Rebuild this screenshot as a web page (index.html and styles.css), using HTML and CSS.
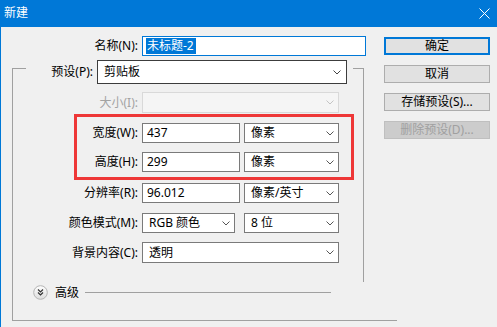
FILE: index.html
```html
<!DOCTYPE html>
<html>
<head>
<meta charset="utf-8">
<link rel="stylesheet" href="styles.css">
</head>
<body>
<div class="window">
  <div class="titlebar">
    <span class="title">新建</span>
    <svg class="close" width="11" height="11" viewBox="0 0 11 11"><path d="M0.5 0.5 L10.5 10.5 M10.5 0.5 L0.5 10.5" stroke="#fff" stroke-width="1" fill="none"/></svg>
  </div>
  <div class="content">
    <div class="form">
      <div class="row name-row">
        <span class="lbl">名称(N):</span>
        <div class="field name-field"><span class="selected">未标题-2</span></div>
      </div>
      <div class="group">
        <div class="inner">
          <div class="preset-row">
            <span class="plbl">预设(P):</span>
            <div class="select dark preset"><span>剪贴板</span><svg class="chev" width="8" height="5" viewBox="0 0 8 5"><path d="M0.5 0.5 L4 4 L7.5 0.5" stroke="#444" fill="none"/></svg></div>
          </div>
          <div class="row r-size">
            <span class="lbl disabled">大小(I):</span>
            <div class="select off wide"><span></span><svg class="chev" width="8" height="5" viewBox="0 0 8 5"><path d="M0.5 0.5 L4 4 L7.5 0.5" stroke="#c4c4c4" fill="none"/></svg></div>
          </div>
          <div class="row r-w">
            <span class="lbl">宽度(W):</span>
            <div class="field num">437</div>
            <div class="select unit"><span>像素</span><svg class="chev" width="8" height="5" viewBox="0 0 8 5"><path d="M0.5 0.5 L4 4 L7.5 0.5" stroke="#555" fill="none"/></svg></div>
          </div>
          <div class="row r-h">
            <span class="lbl">高度(H):</span>
            <div class="field num">299</div>
            <div class="select unit"><span>像素</span><svg class="chev" width="8" height="5" viewBox="0 0 8 5"><path d="M0.5 0.5 L4 4 L7.5 0.5" stroke="#555" fill="none"/></svg></div>
          </div>
          <div class="row r-res">
            <span class="lbl">分辨率(R):</span>
            <div class="field num">96.012</div>
            <div class="select unit"><span>像素/英寸</span><svg class="chev" width="8" height="5" viewBox="0 0 8 5"><path d="M0.5 0.5 L4 4 L7.5 0.5" stroke="#555" fill="none"/></svg></div>
          </div>
          <div class="row r-mode">
            <span class="lbl">颜色模式(M):</span>
            <div class="select mode"><span>RGB 颜色</span><svg class="chev" width="8" height="5" viewBox="0 0 8 5"><path d="M0.5 0.5 L4 4 L7.5 0.5" stroke="#555" fill="none"/></svg></div>
            <div class="select unit gap9"><span>8 位</span><svg class="chev" width="8" height="5" viewBox="0 0 8 5"><path d="M0.5 0.5 L4 4 L7.5 0.5" stroke="#555" fill="none"/></svg></div>
          </div>
          <div class="row r-bg">
            <span class="lbl">背景内容(C):</span>
            <div class="select wide"><span>透明</span><svg class="chev" width="8" height="5" viewBox="0 0 8 5"><path d="M0.5 0.5 L4 4 L7.5 0.5" stroke="#555" fill="none"/></svg></div>
          </div>
        </div>
        <div class="adv">
          <svg class="toggle" width="15" height="15" viewBox="0 0 15 15">
            <defs><linearGradient id="g" x1="0" y1="0" x2="0" y2="1"><stop offset="0" stop-color="#ffffff"/><stop offset="1" stop-color="#dcdcdc"/></linearGradient></defs>
            <circle cx="7.5" cy="7.5" r="6.8" fill="url(#g)" stroke="#b4b4b4" stroke-width="1"/>
            <path d="M5 4.5 L7.5 7 L10 4.5 M5 7.5 L7.5 10 L10 7.5" stroke="#333" stroke-width="1.2" fill="none"/>
          </svg>
          <span class="adv-text">高级</span>
          <div class="adv-line"></div>
        </div>
      </div>
    </div>
    <div class="buttons">
      <div class="btn default">确定</div>
      <div class="btn">取消</div>
      <div class="btn">存储预设(S)...</div>
      <div class="btn off">删除预设(D)...</div>
    </div>
  </div>
  <div class="highlight"></div>
</div>
</body>
</html>
```

FILE: styles.css
```css
* { box-sizing: border-box; }
html, body { margin: 0; padding: 0; }
body {
  background: #f0f0f0;
  font-family: "Noto Sans", "Noto Sans CJK SC", sans-serif;
  font-size: 12px;
  color: #000;
}
.window {
  position: relative;
  width: 497px;
  height: 327px;
  background: #f0f0f0;
  border-left: 1px solid #0078d7;
  overflow: hidden;
}
.titlebar {
  height: 27px;
  margin-left: -1px;
  background: #0078d7;
  color: #fff;
  display: flex;
  align-items: center;
  justify-content: space-between;
  padding: 0 7px 1px 4px;
}
.title { font-size: 12px; line-height: 16px; }
.close { display: block; margin-top: 1px; }

.content {
  display: flex;
  align-items: flex-start;
}
.form {
  width: 382px;
  flex: none;
}
.row {
  display: flex;
  align-items: center;
  height: 20px;
}
.lbl {
  width: 125px;
  flex: none;
  text-align: right;
  margin-right: 4px;
  line-height: 16px;
  white-space: nowrap;
}
.lbl.disabled { color: #a3a3a3; }

.name-row { margin-top: 9px; margin-left: 12px; }
.field {
  height: 100%;
  background: #fff;
  border: 1px solid #7a7a7a;
  display: flex;
  align-items: center;
  padding-left: 4px;
  line-height: 16px;
}
.name-field {
  width: 224px;
  border-color: #0078d7;
  padding-left: 3px;
}
.selected {
  background: #0078d7;
  color: #fff;
  line-height: 16px;
  padding: 0 2px 0 1px;
}
.num { width: 98px; }

.group {
  margin-top: 12px;
  margin-left: 11px;
  width: 385px;
  height: 253px;
  border-left: 1px solid #a0a0a0;
  border-bottom: 1px solid #a0a0a0;
}
.inner {
  width: 351px;
  height: 214px;
  border-top: 1px solid #a0a0a0;
  border-right: 1px solid #a0a0a0;
}
.preset-row {
  margin-top: -9px;
  margin-left: 13px;
  width: 327px;
  height: 24px;
  background: #f0f0f0;
  display: flex;
  align-items: center;
  padding-right: 6px;
}
.plbl {
  width: 67px;
  text-align: right;
  margin-right: 4px;
  line-height: 16px;
}
.select {
  height: 100%;
  background: #fff;
  border: 1px solid #7a7a7a;
  display: flex;
  align-items: center;
  justify-content: space-between;
  padding: 0 4px 0 6px;
  line-height: 16px;
  white-space: nowrap;
}
.select .chev { display: block; flex: none; }
.select.dark { border-color: #3c3c3c; padding-right: 5px; }
.preset { width: 250px; }
.select.off {
  background: #f5f5f5;
  border-color: #d9d9d9;
}
.wide { width: 197px; }
.unit { width: 95px; margin-left: 4px; }
.mode { width: 93px; }
.unit.gap9 { margin-left: 9px; }

.r-size { margin-top: 8px; height: 21px; }
.r-w { margin-top: 10px; }
.r-h { margin-top: 9px; }
.r-res { margin-top: 11px; }
.r-mode { margin-top: 10px; }
.r-bg { margin-top: 9px; height: 21px; }

.adv {
  display: flex;
  align-items: center;
  margin-top: 3px;
  margin-left: 20px;
  height: 15px;
}
.toggle { display: block; flex: none; }
.adv-text { margin-left: 7px; line-height: 16px; }
.adv-line {
  margin-left: 6px;
  width: 246px;
  border-top: 1px solid #a0a0a0;
}

.buttons {
  margin-top: 10px;
  margin-left: 1px;
  width: 106px;
  display: flex;
  flex-direction: column;
  gap: 10px;
}
.btn {
  height: 18px;
  background: #e1e1e1;
  border: 1px solid #adadad;
  display: flex;
  align-items: center;
  justify-content: center;
  line-height: 16px;
  white-space: nowrap;
}
.btn.default { border: 2px solid #0078d7; }
.btn.off {
  background: #cccccc;
  border-color: #bfbfbf;
  color: #a0a0a0;
}

.highlight {
  position: absolute;
  left: 73px;
  top: 114px;
  width: 280px;
  height: 66px;
  border: 3px solid #ee3737;
  pointer-events: none;
}
```
